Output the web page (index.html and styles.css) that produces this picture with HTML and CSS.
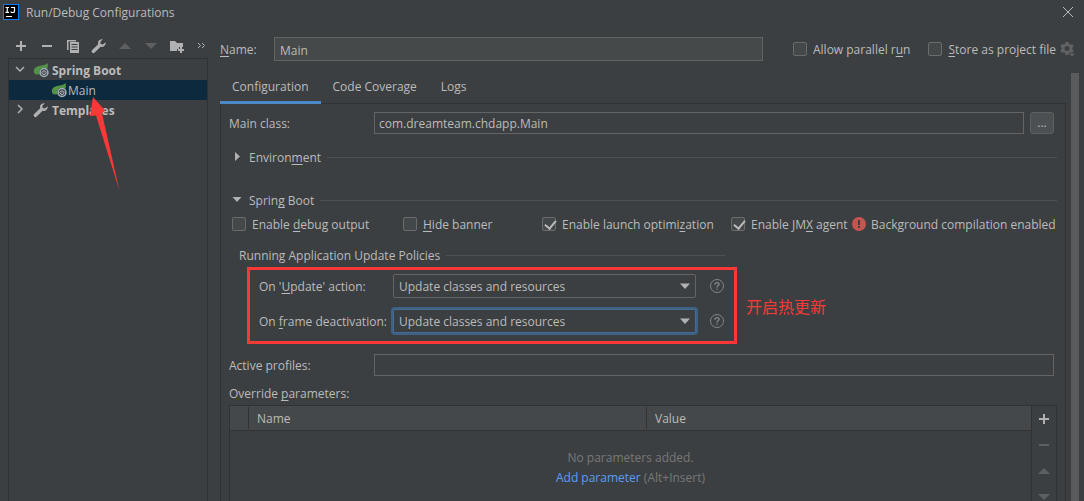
FILE: index.html
```html
<!DOCTYPE html>
<html lang="en">
<head>
<meta charset="utf-8">
<title>Run/Debug Configurations</title>
<link rel="stylesheet" href="styles.css">
</head>
<body>
<svg class="defs" aria-hidden="true">
  <symbol id="plus" viewBox="0 0 16 16"><path d="M7 3h2v4h4v2H9v4H7V9H3V7h4z"/></symbol>
  <symbol id="minus" viewBox="0 0 16 16"><path d="M3 7h10v2H3z"/></symbol>
  <symbol id="up" viewBox="0 0 16 16"><path d="M2 11h12L8 5z"/></symbol>
  <symbol id="down" viewBox="0 0 16 16"><path d="M2 5h12l-6 6z"/></symbol>
  <symbol id="drop" viewBox="0 0 16 16"><path d="M3 5.500h10l-5 5.500z"/></symbol>
  <symbol id="wrench" viewBox="0 0 16 16"><path d="M14.6 4.2 11.9 6.6 9.7 5.9 9.3 3.9 11.8 1.3C9.9.8 7.8 1.8 7.2 3.7c-.3.9-.2 1.7 0 2.500L1.200 12.100a1.600 1.600 0 0 0 2.500 2.500L9.600 8.800c2.600.9 5.600-1.300 5-4.600z"/></symbol>
  <symbol id="leaf" viewBox="0 0 16 16">
    <path fill="#529345" d="M14.500 1C12.500 3.500 8 3.200 4.500 4.400 1 5.600 0 9 1.700 11.600c.7 1 3 1 5.200.6C6.500 8.300 10 5.500 14.300 7.200 15 5 15 3 14.500 1z"/>
    <circle cx="11" cy="10.500" r="4.800" fill="#3c3f41"/>
    <circle cx="11" cy="10.500" r="3.900" fill="none" stroke="#9fb0ba" stroke-width="1.500"/>
    <path fill="none" stroke="#b8c4cc" stroke-width="1" d="M9.500 9.200a2 2 0 1 0 3 0M11 8v2.600"/>
  </symbol>
  <symbol id="help" viewBox="0 0 16 16">
    <circle cx="8" cy="8" r="6.500" fill="none" stroke="#838687"/>
    <path fill="none" stroke="#838687" stroke-width="1.400" d="M6 6.700C6 4 10.200 4 10 6.500 9.900 7.900 8 7.700 8 9.400"/>
    <path fill="#838687" d="M7.300 10.400h1.400v1.400H7.300z"/>
  </symbol>
</svg>
<div class="dialog">
  <header class="titlebar">
    <svg class="logo" viewBox="0 0 16 16"><path fill="#087cfa" d="M0 0h16v16H0z"/><path fill="#000" d="M1 1h14v14H1z"/><path fill="none" stroke="#fff" stroke-width="1.200" d="M2.500 3.500h3.500M4.250 3.500v5M2.500 8.400h3.500M8 3.500h3.500v3.400q0 1.600-1.500 1.600H8.500L7.700 7.700"/><path fill="#fff" d="M3 12h6v1H3z"/></svg>
    <h1 class="title">Run/Debug Configurations</h1>
    <button class="close" aria-label="Close"><svg class="icon" viewBox="0 0 16 16"><path fill="none" stroke="#b8babb" d="m3 3 10 10M13 3 3 13"/></svg></button>
  </header>

  <div class="content">
    <aside class="sidebar">
      <div class="toolbar">
        <button aria-label="Add"><svg class="icon"><use href="#plus"/></svg></button>
        <button aria-label="Remove"><svg class="icon"><use href="#minus"/></svg></button>
        <button aria-label="Copy"><svg class="icon" viewBox="0 0 16 16"><path d="M2 2h9v1.500H3.500V12H2z"/><path fill-rule="evenodd" d="M5 4h9v11H5zm1.500 2v1h6V6zm0 2.500v1h6v-1zm0 2.500v1h6v-1z"/></svg></button>
        <button aria-label="Edit templates"><svg class="icon"><use href="#wrench"/></svg></button>
        <button aria-label="Move up" disabled><svg class="icon"><use href="#up"/></svg></button>
        <button aria-label="Move down" disabled><svg class="icon"><use href="#down"/></svg></button>
        <button aria-label="New folder"><svg class="icon" viewBox="0 0 16 16"><path d="M1 3h5l2 2h6v4h-4v2H8v2H1z"/><path d="M11 9h2v2h2v2h-2v2h-2v-2H9v-2h2z"/></svg></button>
        <button aria-label="More"><svg class="icon" viewBox="0 0 16 16"><path fill="none" stroke="#afb1b3" d="m5 5 2.500 2.500L5 10M9 5l2.500 2.500L9 10"/></svg></button>
      </div>
      <ul class="tree">
        <li class="node"><svg class="icon chevron" viewBox="0 0 16 16"><path d="m4 5 4 4 4-4"/></svg><svg class="icon"><use href="#leaf"/></svg><b>Spring Boot</b></li>
        <li class="node child selected"><svg class="icon"><use href="#leaf"/></svg><span>Main</span></li>
        <li class="node"><svg class="icon chevron" viewBox="0 0 16 16"><path d="m6 3 4 4-4 4"/></svg><svg class="icon"><use href="#wrench"/></svg><b>Templates</b></li>
      </ul>
    </aside>

    <main class="editor">
      <div class="name-row">
        <label class="name-label" for="name"><u>N</u>ame:</label>
        <input class="field name-field" id="name" type="text" value="Main">
        <label class="check parallel"><input type="checkbox"><span>Allow parallel r<u>u</u>n</span></label>
        <label class="check"><input type="checkbox"><span><u>S</u>tore as project file</span></label>
        <button class="gear" aria-label="Storage options"><svg class="icon" viewBox="0 0 16 16"><path fill-rule="evenodd" d="m5.500 1h3l.4 1.900 1.300.8 1.900-.7 1.500 2.600-1.400 1.300v1.400l1.400 1.300-1 1.800H10l-1.100.7-.4 1.900h-3l-.4-1.900-1.300-.8-1.900.7L.4 9.400l1.400-1.300V6.900L.4 5.600 1.900 3l1.900.7 1.300-.8zM7 5a2.500 2.500 0 1 0 0 5 2.500 2.500 0 0 0 0-5z"/><path d="M9 12.500h6L12 15.500z"/></svg></button>
      </div>

      <div class="scroll-area">
        <div class="pane">
          <div class="tabs" role="tablist">
            <button class="tab active" role="tab" aria-selected="true">Configuration</button>
            <button class="tab" role="tab">Code Coverage</button>
            <button class="tab" role="tab">Logs</button>
          </div>
          <div class="panel">
            <div class="form-row">
              <label for="main-class">Main class:</label>
              <input class="field" id="main-class" type="text" value="com.dreamteam.chdapp.Main">
              <button class="browse" aria-label="Browse">...</button>
            </div>

            <h2 class="section environment"><svg class="icon" viewBox="0 0 16 16"><path d="M6 3v9l5-4.500z"/></svg><span>Environ<u>m</u>ent</span></h2>
            <h2 class="section spring"><svg class="icon" viewBox="0 0 16 16"><path d="M3.500 5h9L8 10z"/></svg><span>Sprin<u>g</u> Boot</span></h2>

            <div class="options">
              <label class="check"><input type="checkbox"><span>Enable <u>d</u>ebug output</span></label>
              <label class="check"><input type="checkbox"><span><u>H</u>ide banner</span></label>
              <label class="check"><input type="checkbox" checked><span>Enable launch optimi<u>z</u>ation</span></label>
              <label class="check"><input type="checkbox" checked><span>Enable JM<u>X</u> agent</span></label>
              <span class="warning"><svg class="icon" viewBox="0 0 16 16"><circle cx="8" cy="8" r="7" fill="#c75450"/><path fill="#3c3f41" d="M7 4h2v5H7zM7 10h2v2H7z"/></svg><span>Background compilation enabled</span></span>
            </div>

            <h3 class="section policies-title"><span>Running Application Update Policies</span></h3>
            <div class="policies">
              <div class="highlight">
                <div class="policy">
                  <label for="on-update">On '<u>U</u>pdate' action:</label>
                  <div class="combo"><select id="on-update"><option>Update classes and resources</option></select><svg class="icon"><use href="#drop"/></svg></div>
                  <button aria-label="Help"><svg class="icon"><use href="#help"/></svg></button>
                </div>
                <div class="policy">
                  <label for="on-frame">On <u>f</u>rame deactivation:</label>
                  <div class="combo focused"><select id="on-frame"><option>Update classes and resources</option></select><svg class="icon"><use href="#drop"/></svg></div>
                  <button aria-label="Help"><svg class="icon"><use href="#help"/></svg></button>
                </div>
              </div>
              <p class="note" lang="zh-CN">开启热更新</p>
            </div>

            <div class="form-row profiles">
              <label for="profiles">Active profiles:</label>
              <input class="field" id="profiles" type="text">
            </div>

            <p class="override">Override <u>p</u>arameters:</p>
            <div class="parameters">
              <table>
                <thead><tr><th class="toggle"></th><th class="key"><span>Name</span></th><th><span>Value</span></th></tr></thead>
                <tbody><tr><td colspan="3">No parameters added.<br><a href="#add">Add parameter</a> (Alt+Insert)</td></tr></tbody>
              </table>
              <div class="row-actions">
                <button aria-label="Add parameter"><svg class="icon"><use href="#plus"/></svg></button>
                <button aria-label="Remove parameter" disabled><svg class="icon"><use href="#minus"/></svg></button>
                <button aria-label="Move parameter up" disabled><svg class="icon"><use href="#up"/></svg></button>
                <button aria-label="Move parameter down" disabled><svg class="icon"><use href="#down"/></svg></button>
              </div>
            </div>
          </div>
        </div>
        <div class="scrollbar"></div>
      </div>
    </main>
  </div>
  <svg class="arrow" viewBox="0 0 30 94" aria-hidden="true"><path d="M3 0 15 13.500 12 16.500 29.500 94 6 18.500 0 19z"/></svg>
</div>
</body>
</html>
```

FILE: styles.css
```css
* { box-sizing: border-box; }

body {
  margin: 0;
  background: #3c3f41;
  color: #bbbbbb;
  font: 12px/16px "Open Sans", "Noto Sans", "Noto Sans CJK SC", sans-serif;
}

h1, h2, h3, p, ul { margin: 0; padding: 0; font-size: 12px; font-weight: 400; }
button, input, select { font: inherit; color: inherit; margin: 0; }
button { padding: 0; border: 0; background: none; display: flex; align-items: center; justify-content: center; }
u { text-underline-offset: 2px; text-decoration-thickness: 1px; text-decoration-skip-ink: none; }
label, span { white-space: nowrap; }

.defs { position: absolute; width: 0; height: 0; }
.icon { width: 16px; height: 16px; flex: none; fill: #afb1b3; }
button:disabled .icon { fill: #5d5f60; }

.dialog { position: relative; height: 100vh; display: flex; flex-direction: column; overflow: hidden; }

.titlebar { display: flex; align-items: center; height: 24px; padding: 0 8px 0 3px; flex: none; }
.logo { width: 16px; height: 16px; }
.title { flex: 1; padding: 2px 0 0 7px; }

.content { flex: 1; min-height: 0; display: flex; gap: 12px; padding-left: 8px; }

.sidebar { width: 200px; flex: none; display: flex; flex-direction: column; }
.toolbar { display: flex; height: 34px; padding-top: 10px; }
.toolbar button { width: 26px; height: 24px; flex: none; }
.toolbar button:last-child { width: 22px; }
.tree { flex: 1; border: 1px solid #2f3133; border-bottom: 0; padding-top: 1px; list-style: none; }
.node { display: flex; align-items: center; height: 20px; padding-left: 3px; }
.node b, .node span { padding: 2px 0 0 1px; }
.node b { margin-left: 2px; }
.chevron { fill: none; stroke: #afb1b3; stroke-width: 1.500; margin-right: 5px; }
.child { padding-left: 42px; }
.selected { background: #0d293e; }

.editor { flex: 1; min-width: 0; display: flex; flex-direction: column; padding-top: 13px; }
.name-row { display: flex; align-items: center; height: 24px; padding-right: 8px; flex: none; }
.name-label { width: 54px; padding-top: 2px; }
.field { height: 22px; min-width: 0; flex: 1; padding: 0 4px; border: 1px solid #646464; border-radius: 0; background: #3c3f41; outline: 0; }
.name-field { height: 24px; padding: 2px 5px 0; background: #45494a; }
.check { display: flex; align-items: center; gap: 6px; }
.check span { padding-top: 2px; }
.check input { appearance: none; width: 14px; height: 14px; border: 1px solid #6b6b6b; border-radius: 2px; background: #43494a; position: relative; flex: none; }
.check input:checked::after { content: ""; position: absolute; left: 4px; top: 0; width: 5px; height: 9px; border: solid #bbbbbb; border-width: 0 2px 2px 0; transform: rotate(40deg); }
.parallel { margin: 0 18px 0 30px; }
.gear { margin-left: 4px; }
.gear .icon { fill: #606263; }

.scroll-area { flex: 1; min-height: 0; display: flex; gap: 5px; padding: 12px 5px 0 0; }
.pane { flex: 1; min-width: 0; display: flex; flex-direction: column; }
.scrollbar { width: 8px; background: #595b5d; }

.tabs { display: flex; height: 31px; border-bottom: 1px solid #323232; flex: none; }
.tab { height: 31px; padding: 0 12px; border-bottom: 3px solid transparent; }
.tab.active { border-color: #4a88c7; }

.panel { flex: 1; min-height: 0; display: flex; flex-direction: column; border: solid #323232; border-width: 0 1px; padding: 8px 8px 0; }
.form-row { display: flex; align-items: center; padding-right: 3px; }
.form-row label { width: 145px; padding-top: 2px; flex: none; }
.browse { width: 24px; height: 22px; margin-left: 6px; border: 1px solid #5e6060; border-radius: 3px; background: #4c5052; }

.section { display: flex; align-items: center; height: 16px; }
.section span { padding-top: 2px; }
.section::after { content: ""; flex: 1; height: 1px; margin-left: 6px; background: #515151; }
.section .icon { margin-right: 4px; }
.environment { margin-top: 15px; }
.spring { margin-top: 27px; }

.options { display: grid; grid-template-columns: 171px 139px 189px 120px 1fr; height: 16px; align-items: center; margin: 7px 0 0 3px; }
.warning { display: flex; align-items: center; gap: 4px; }
.warning span { padding-top: 2px; }

.policies-title { width: 486px; margin: 16px 0 0 10px; }
.policies { display: flex; align-items: center; gap: 9px; margin: 4px 0 0 18px; }
.highlight { width: 490px; border: 3px solid #fb3838; padding: 4px 9px 8px; display: grid; gap: 11px; }
.policy { display: flex; align-items: center; }
.policy label { width: 134px; padding-top: 2px; }
.policy button { margin-left: 13px; }
.combo { position: relative; flex: 1; display: flex; }
.combo select { appearance: none; flex: 1; height: 24px; padding: 2px 5px 0; border: 1px solid #646464; border-radius: 2px; background: #3c3f41; outline: 0; }
.combo .icon { position: absolute; right: 3px; top: 4px; pointer-events: none; }
.focused select { border-color: #466d94; box-shadow: 0 0 0 2px #3d6185; }
.note { color: #fb3838; font: 16px/24px "Noto Sans CJK SC", sans-serif; }

.profiles { margin-top: 10px; }
.override { margin: 10px 0 3px; }

.parameters { flex: 1; min-height: 0; display: flex; border: 1px solid #323232; border-bottom: 0; overflow: hidden; }
table { flex: 1; border-collapse: collapse; table-layout: fixed; align-self: flex-start; }
th { height: 24px; padding: 1px 0; background: #45484a; border-bottom: 1px solid #323232; text-align: left; font-weight: 400; }
th span { display: block; padding: 4px 8px 2px; border-left: 1px solid #323232; }
.toggle { width: 18px; }
.key { width: 398px; }
td { padding: 17px 0 0; text-align: center; line-height: 20px; color: #787878; }
a { color: #589df6; text-decoration: none; }
.row-actions { width: 25px; border-left: 1px solid #323232; display: flex; flex-direction: column; flex: none; }
.row-actions button { width: 24px; height: 26px; flex: none; }

.arrow { position: absolute; left: 90px; top: 97px; width: 30px; height: 94px; fill: #fb3838; }
```
